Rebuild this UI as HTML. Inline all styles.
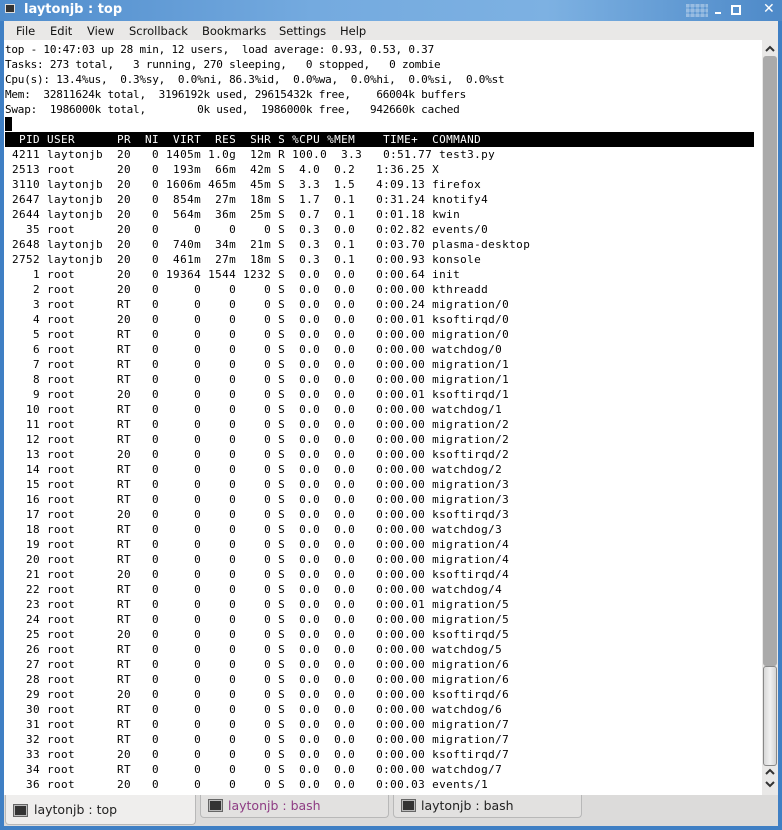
<!DOCTYPE html>
<html><head><meta charset="utf-8"><style>
*{margin:0;padding:0;box-sizing:border-box}
body{width:782px;height:830px;overflow:hidden;background:#3f7fc4;position:relative;font-family:"DejaVu Sans","Liberation Sans",sans-serif}
#title{position:absolute;left:0;top:0;width:782px;height:21px;background:linear-gradient(90deg,#4f8ccc 0%,#74aadf 40%,#7db1e2 70%,#4d89c8 100%)}
#title .t{position:absolute;left:24px;top:2px;color:#fff;font-weight:bold;font-size:13px}
#menu{position:absolute;left:4px;top:21px;width:774px;height:19px;background:#e9e8e7;font-size:11.5px;color:#111}
#menu span{position:absolute;top:3px}
#term{position:absolute;left:4px;top:40px;width:758px;height:755px;background:#fff;overflow:hidden}
pre{font-family:"DejaVu Sans Mono","Liberation Mono",monospace;font-size:11px;line-height:15px;color:#000;position:absolute;left:1px;white-space:pre}
#sum{top:2px;letter-spacing:-0.22px}
#tab{top:92px;letter-spacing:0.38px}
#hdr{position:absolute;left:1px;top:92px;width:749px;height:15px;background:#000}
#cur{position:absolute;left:1px;top:77px;width:7px;height:14px;background:#000}
#sb{position:absolute;left:762px;top:40px;width:16px;height:755px;background:#e9e8e7}
#trk{position:absolute;left:1px;top:16px;width:14px;height:610px;background:#aaa;border-radius:3px}
#thumb{position:absolute;left:1px;top:626px;width:14px;height:100px;background:linear-gradient(90deg,#d8d8d8,#f0f0f0,#d4d4d4);border:1px solid #888;border-radius:3px}
#tabs{position:absolute;left:4px;top:795px;width:774px;height:31px;background:#dcdbda}
.tb{position:absolute;font-size:12.5px;color:#222}
.ic{position:absolute;width:15px;height:13px;background:#333;border:1px solid #666;box-shadow:inset 0 0 0 1px #bbb}
</style></head><body>
<div id="title">
 <div style="position:absolute;left:5px;top:4px;width:10px;height:9px;background:#333;border:1px solid #ddd"></div>
 <span class="t">laytonjb : top</span>
 <div style="position:absolute;left:686px;top:4px;width:22px;height:13px;background:repeating-linear-gradient(0deg,rgba(255,255,255,.2) 0 3px,transparent 3px 5px),repeating-linear-gradient(90deg,rgba(255,255,255,.2) 0 3px,transparent 3px 5px)"></div>
 <div style="position:absolute;left:715px;top:12px;width:6px;height:2px;background:#fff"></div>
 <div style="position:absolute;left:731px;top:5px;width:10px;height:10px;border:2px solid #fff"></div>
 <span style="position:absolute;left:763px;top:1px;color:#fff;font-size:14px;font-weight:bold">✕</span>
</div>
<div id="menu"><span style="left:12px">File</span><span style="left:46px">Edit</span><span style="left:83px">View</span><span style="left:125px">Scrollback</span><span style="left:198px">Bookmarks</span><span style="left:275px">Settings</span><span style="left:336px">Help</span></div>
<div id="term">
<pre id="sum">top - 10:47:03 up 28 min, 12 users,  load average: 0.93, 0.53, 0.37
Tasks: 273 total,   3 running, 270 sleeping,   0 stopped,   0 zombie
Cpu(s): 13.4%us,  0.3%sy,  0.0%ni, 86.3%id,  0.0%wa,  0.0%hi,  0.0%si,  0.0%st
Mem:  32811624k total,  3196192k used, 29615432k free,    66004k buffers
Swap:  1986000k total,        0k used,  1986000k free,   942660k cached</pre>
<div id="cur"></div>
<div id="hdr"></div>
<pre id="tab"><span style="color:#fff">  PID USER      PR  NI  VIRT  RES  SHR S %CPU %MEM    TIME+  COMMAND</span>
 4211 laytonjb  20   0 1405m 1.0g  12m R 100.0  3.3   0:51.77 test3.py
 2513 root      20   0  193m  66m  42m S  4.0  0.2   1:36.25 X
 3110 laytonjb  20   0 1606m 465m  45m S  3.3  1.5   4:09.13 firefox
 2647 laytonjb  20   0  854m  27m  18m S  1.7  0.1   0:31.24 knotify4
 2644 laytonjb  20   0  564m  36m  25m S  0.7  0.1   0:01.18 kwin
   35 root      20   0     0    0    0 S  0.3  0.0   0:02.82 events/0
 2648 laytonjb  20   0  740m  34m  21m S  0.3  0.1   0:03.70 plasma-desktop
 2752 laytonjb  20   0  461m  27m  18m S  0.3  0.1   0:00.93 konsole
    1 root      20   0 19364 1544 1232 S  0.0  0.0   0:00.64 init
    2 root      20   0     0    0    0 S  0.0  0.0   0:00.00 kthreadd
    3 root      RT   0     0    0    0 S  0.0  0.0   0:00.24 migration/0
    4 root      20   0     0    0    0 S  0.0  0.0   0:00.01 ksoftirqd/0
    5 root      RT   0     0    0    0 S  0.0  0.0   0:00.00 migration/0
    6 root      RT   0     0    0    0 S  0.0  0.0   0:00.00 watchdog/0
    7 root      RT   0     0    0    0 S  0.0  0.0   0:00.00 migration/1
    8 root      RT   0     0    0    0 S  0.0  0.0   0:00.00 migration/1
    9 root      20   0     0    0    0 S  0.0  0.0   0:00.01 ksoftirqd/1
   10 root      RT   0     0    0    0 S  0.0  0.0   0:00.00 watchdog/1
   11 root      RT   0     0    0    0 S  0.0  0.0   0:00.00 migration/2
   12 root      RT   0     0    0    0 S  0.0  0.0   0:00.00 migration/2
   13 root      20   0     0    0    0 S  0.0  0.0   0:00.00 ksoftirqd/2
   14 root      RT   0     0    0    0 S  0.0  0.0   0:00.00 watchdog/2
   15 root      RT   0     0    0    0 S  0.0  0.0   0:00.00 migration/3
   16 root      RT   0     0    0    0 S  0.0  0.0   0:00.00 migration/3
   17 root      20   0     0    0    0 S  0.0  0.0   0:00.00 ksoftirqd/3
   18 root      RT   0     0    0    0 S  0.0  0.0   0:00.00 watchdog/3
   19 root      RT   0     0    0    0 S  0.0  0.0   0:00.00 migration/4
   20 root      RT   0     0    0    0 S  0.0  0.0   0:00.00 migration/4
   21 root      20   0     0    0    0 S  0.0  0.0   0:00.00 ksoftirqd/4
   22 root      RT   0     0    0    0 S  0.0  0.0   0:00.00 watchdog/4
   23 root      RT   0     0    0    0 S  0.0  0.0   0:00.01 migration/5
   24 root      RT   0     0    0    0 S  0.0  0.0   0:00.00 migration/5
   25 root      20   0     0    0    0 S  0.0  0.0   0:00.00 ksoftirqd/5
   26 root      RT   0     0    0    0 S  0.0  0.0   0:00.00 watchdog/5
   27 root      RT   0     0    0    0 S  0.0  0.0   0:00.00 migration/6
   28 root      RT   0     0    0    0 S  0.0  0.0   0:00.00 migration/6
   29 root      20   0     0    0    0 S  0.0  0.0   0:00.00 ksoftirqd/6
   30 root      RT   0     0    0    0 S  0.0  0.0   0:00.00 watchdog/6
   31 root      RT   0     0    0    0 S  0.0  0.0   0:00.00 migration/7
   32 root      RT   0     0    0    0 S  0.0  0.0   0:00.00 migration/7
   33 root      20   0     0    0    0 S  0.0  0.0   0:00.00 ksoftirqd/7
   34 root      RT   0     0    0    0 S  0.0  0.0   0:00.00 watchdog/7
   36 root      20   0     0    0    0 S  0.0  0.0   0:00.03 events/1</pre>
</div>
<div id="sb">
 <svg style="position:absolute;left:3px;top:5px" width="10" height="8"><path d="M1 6 L5 2 L9 6" stroke="#333" stroke-width="2" fill="none"/></svg>
 <div id="trk"></div><div id="thumb"></div>
 <svg style="position:absolute;left:3px;top:728px" width="10" height="8"><path d="M1 6 L5 2 L9 6" stroke="#333" stroke-width="2" fill="none"/></svg>
 <svg style="position:absolute;left:3px;top:740px" width="10" height="8"><path d="M1 2 L5 6 L9 2" stroke="#333" stroke-width="2" fill="none"/></svg>
</div>
<div id="tabs">
 <div style="position:absolute;left:1px;top:0;width:191px;height:30px;background:#efeeed;border:1px solid #b8b8b8;border-top:none;border-radius:0 0 4px 4px"></div>
 <div class="ic" style="left:9px;top:9px"></div>
 <span class="tb" style="left:30px;top:7px">laytonjb : top</span>
 <div style="position:absolute;left:196px;top:0;width:189px;height:23px;background:#e2e1e0;border:1px solid #b8b8b8;border-top:none;border-radius:0 0 4px 4px"></div>
 <div class="ic" style="left:204px;top:4px"></div>
 <span class="tb" style="left:224px;top:3px;color:#8e3c84">laytonjb : bash</span>
 <div style="position:absolute;left:389px;top:0;width:189px;height:23px;background:#e2e1e0;border:1px solid #b8b8b8;border-top:none;border-radius:0 0 4px 4px"></div>
 <div class="ic" style="left:397px;top:4px"></div>
 <span class="tb" style="left:417px;top:3px">laytonjb : bash</span>
</div>
</body></html>
